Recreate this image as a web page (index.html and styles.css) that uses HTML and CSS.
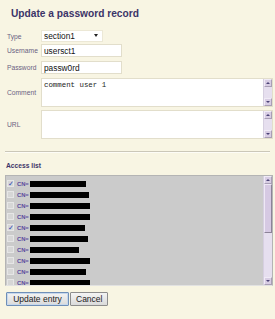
FILE: index.html
```html
<!DOCTYPE html>
<html>
<head>
<meta charset="UTF-8">
<title>Update a password record</title>
<link rel="stylesheet" href="styles.css">
</head>
<body>
<h2 class="title">Update a password record</h2>
<form class="record" action="update" method="POST">
	<div class="field field-type">
		<label for="type">Type</label>
		<span class="selectBox">
			<select id="type" name="type">
				<option>section1</option>
				<option>section2</option>
			</select>
		</span>
	</div>
	<div class="field field-user">
		<label for="username">Username</label>
		<input type="text" class="text" id="username" name="username" value="usersct1">
	</div>
	<div class="field field-pass">
		<label for="password">Password</label>
		<input type="text" class="text" id="password" name="password" value="passw0rd">
	</div>
	<div class="field field-comment">
		<label for="comment">Comment</label>
		<div class="areaBox">
			<textarea class="area" id="comment" name="comment">comment user 1</textarea>
			<div class="scrollbar">
				<span class="sbBtn up"></span>
				<span class="sbTrack"></span>
				<span class="sbBtn down"></span>
			</div>
		</div>
	</div>
	<div class="field field-url">
		<label for="url">URL</label>
		<div class="areaBox">
			<textarea class="area" id="url" name="url"></textarea>
			<div class="scrollbar">
				<span class="sbBtn up"></span>
				<span class="sbTrack"></span>
				<span class="sbBtn down"></span>
			</div>
		</div>
	</div>

	<hr class="sep">

	<h3 class="subtitle">Access list</h3>
	<div class="listBox">
		<div class="accessList">
			<label class="entry"><input type="checkbox" checked><span class="cn">CN=</span><span class="name" style="width:56px"></span></label>
			<label class="entry"><input type="checkbox"><span class="cn">CN=</span><span class="name" style="width:59px"></span></label>
			<label class="entry"><input type="checkbox"><span class="cn">CN=</span><span class="name" style="width:60px"></span></label>
			<label class="entry"><input type="checkbox"><span class="cn">CN=</span><span class="name" style="width:60px"></span></label>
			<label class="entry"><input type="checkbox" checked><span class="cn">CN=</span><span class="name" style="width:55px"></span></label>
			<label class="entry"><input type="checkbox"><span class="cn">CN=</span><span class="name" style="width:58px"></span></label>
			<label class="entry"><input type="checkbox"><span class="cn">CN=</span><span class="name" style="width:49px"></span></label>
			<label class="entry"><input type="checkbox"><span class="cn">CN=</span><span class="name" style="width:60px"></span></label>
			<label class="entry"><input type="checkbox"><span class="cn">CN=</span><span class="name" style="width:56px"></span></label>
			<label class="entry"><input type="checkbox"><span class="cn">CN=</span><span class="name" style="width:60px"></span></label>
		</div>
		<div class="scrollbar">
			<span class="sbBtn up"></span>
			<span class="sbTrack"><span class="sbThumb"></span></span>
			<span class="sbBtn down"></span>
		</div>
	</div>

	<div class="buttons">
		<input type="submit" class="btn btn-main" value="Update entry">
		<input type="button" class="btn" value="Cancel">
	</div>
</form>
</body>
</html>
```

FILE: styles.css
```css
* {
	margin: 0px;
	padding: 0px;
	box-sizing: border-box;
}

body {
	background: #f8f5e3;
	font-family: "Liberation Sans", Arial, sans-serif;
	padding: 0 2px 0 5px;
}

.title {
	font-size: 10.2px;
	line-height: 12px;
	color: #3c3468;
	padding: 8px 0 0 6px;
}

/* form rows */
.field {
	display: flex;
	align-items: center;
}

.field label {
	width: 36px;
	padding-left: 2px;
	font-size: 6.7px;
	color: #6a5f82;
}

.field-type {
	margin-top: 10px;
	height: 12px;
}

.field-user {
	margin-top: 2px;
	height: 13px;
}

.field-pass {
	margin-top: 4px;
	height: 13px;
}

.field-comment {
	margin-top: 4px;
	height: 29px;
}

.field-url {
	margin-top: 3px;
	height: 29px;
}

.text {
	width: 81px;
	height: 13px;
	border: 1px solid #e2decb;
	background: #fff;
	outline: none;
	font-family: "Liberation Sans", Arial, sans-serif;
	font-size: 8.3px;
	padding: 0 2px;
	color: #111;
}

.selectBox {
	position: relative;
	display: flex;
	width: 62px;
	height: 12px;
}

.selectBox select {
	appearance: none;
	-webkit-appearance: none;
	width: 100%;
	height: 12px;
	line-height: 10px;
	border: 1px solid #ece8d6;
	border-radius: 0;
	background: #fff;
	font-family: "Liberation Sans", Arial, sans-serif;
	font-size: 8.3px;
	padding: 0 2px;
	color: #111;
	outline: none;
}

.selectBox::after {
	content: "";
	position: absolute;
	right: 5px;
	top: 4px;
	border-left: 2.5px solid transparent;
	border-right: 2.5px solid transparent;
	border-top: 3px solid #222;
}

.areaBox {
	display: flex;
	width: 232px;
	height: 29px;
	border: 1px solid #e2decb;
	background: #fff;
}

.area {
	flex: 1;
	resize: none;
	border: none;
	background: none;
	outline: none;
	overflow: hidden;
	font-family: "Liberation Mono", "Courier New", monospace;
	font-size: 7.4px;
	line-height: 9px;
	padding: 2px 2px;
	color: #222;
}

/* fake scrollbar */
.scrollbar {
	display: flex;
	flex-direction: column;
	width: 9px;
	background: #e6dfef;
	border-left: 1px solid #d6cfe0;
}

.sbBtn {
	display: flex;
	align-items: center;
	justify-content: center;
	height: 8px;
	background: #d8cde4;
	border: 1px solid #a99fb6;
	border-top-color: #f0ebf6;
	border-left-color: #f0ebf6;
}

.sbBtn::after {
	content: "";
	border-left: 2px solid transparent;
	border-right: 2px solid transparent;
}

.up::after {
	border-bottom: 2px solid #4b4276;
}

.down::after {
	border-top: 2px solid #4b4276;
}

.sbTrack {
	flex: 1;
}

.sbThumb {
	display: block;
	height: 49px;
	background: #d6c9e3;
	border: 1px solid #8c8398;
	border-top-color: #eee8f5;
	border-left-color: #eee8f5;
}

.sep {
	margin: 12px 3px 0 0;
	border: none;
	border-top: 1px solid #cbc7b8;
	border-bottom: 1px solid #fdfcf6;
}

.subtitle {
	font-size: 6.7px;
	line-height: 8px;
	color: #3c3468;
	padding: 9px 0 0 1px;
}

/* access list */
.listBox {
	display: flex;
	margin-top: 5px;
	width: 268px;
	height: 111px;
	background: #cbcbcb;
	border: 1px solid #b4b4b4;
	border-bottom-color: #e2e2e2;
}

.accessList {
	flex: 1;
	overflow: hidden;
	padding-top: 2px;
}

.entry {
	display: flex;
	align-items: center;
	height: 11px;
	padding-left: 1px;
}

.entry input {
	appearance: none;
	-webkit-appearance: none;
	width: 7px;
	height: 7px;
	margin-right: 3px;
	border: 1px solid #e6e6e6;
	background: #d6d6d6;
	display: inline-grid;
	place-content: center;
}

.entry input:checked::after {
	content: "\2713";
	font-size: 7px;
	line-height: 7px;
	color: #2a48b8;
}

.cn {
	font-size: 5.8px;
	font-weight: bold;
	color: #5a4a9e;
	width: 13px;
}

.name {
	display: inline-block;
	height: 6px;
	background: #000;
}

/* buttons */
.buttons {
	display: flex;
	gap: 1px;
	margin-top: 6px;
	padding-left: 1px;
}

.btn {
	height: 14px;
	padding: 0 5px;
	font-family: "Liberation Sans", Arial, sans-serif;
	font-size: 8.5px;
	color: #222;
	background: linear-gradient(#f4f4f4, #dadada);
	border: 1px solid #8d8d8d;
	border-radius: 1px;
	cursor: pointer;
}

.btn-main {
	width: 63px;
	border-color: #6f8fb8;
	box-shadow: inset 0 0 0 1px #c7d8ec;
}
```
